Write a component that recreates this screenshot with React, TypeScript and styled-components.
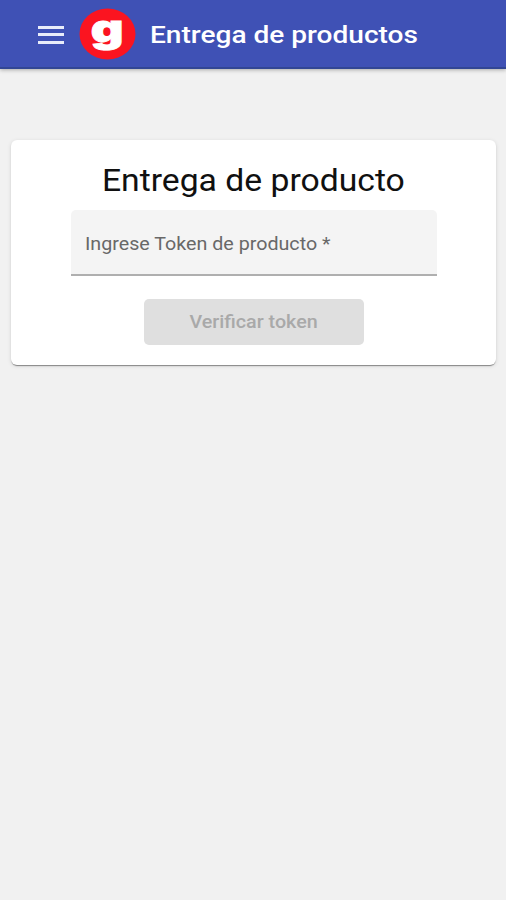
import React from "react";
import styled, { createGlobalStyle } from "styled-components";

const GlobalStyle = createGlobalStyle`
  * { box-sizing: border-box; }
  body {
    margin: 0;
    background: #f1f1f1;
    font-family: Roboto, "Liberation Sans", sans-serif;
  }
`;

const Page = styled.div`
  min-height: 900px;
  display: flex;
  flex-direction: column;
  background: #f1f1f1;
`;

const Toolbar = styled.header`
  height: 69px;
  display: flex;
  align-items: center;
  padding-left: 38px;
  background: #3f51b5;
  border-bottom: 2px solid #324694;
  box-shadow: 0 1px 4px rgba(0, 0, 0, 0.3);
`;

const MenuButton = styled.button`
  width: 26px;
  height: 18px;
  margin: 2px 15px 0 0;
  padding: 0;
  border: 0;
  background: none;
  display: flex;
  flex-direction: column;
  justify-content: space-between;
`;

const MenuLine = styled.span`
  height: 3px;
  background: #e8ecfa;
`;

const Logo = styled.svg`
  width: 57px;
  height: 52px;
  margin-right: 14px;
  display: block;
  overflow: visible;
`;

const Stretched = styled.span<{ $ratio: number; $origin?: string }>`
  display: inline-block;
  white-space: nowrap;
  transform: scaleX(${(p) => p.$ratio});
  transform-origin: ${(p) => p.$origin ?? "center"};
`;

const ToolbarTitle = styled.h1`
  margin: 2px 0 0;
  font-size: 24.4px;
  line-height: 32px;
  font-weight: 500;
  color: #fff;
`;

const Card = styled.main`
  height: 225px;
  margin: 71px 10px 0 11px;
  padding-top: 21px;
  display: flex;
  flex-direction: column;
  align-items: center;
  background: #fff;
  border-radius: 6px;
  box-shadow: 0 2px 1px -1px rgba(0, 0, 0, 0.3), 0 1px 1px rgba(0, 0, 0, 0.14),
    0 1px 4px rgba(0, 0, 0, 0.12);
`;

const CardTitle = styled.h2`
  margin: 0;
  font-size: 31px;
  line-height: 40px;
  font-weight: 400;
  color: #101010;
`;

const Field = styled.label`
  width: 366px;
  height: 66px;
  margin-top: 9px;
  padding: 3px 15px 0 14.5px;
  display: flex;
  align-items: center;
  background: #f4f4f4;
  border-bottom: 2px solid #afafaf;
  border-radius: 5px 5px 0 0;
  font-size: 18.2px;
  color: #686868;
`;

const SubmitButton = styled.button`
  width: 220px;
  height: 46px;
  margin-top: 23px;
  padding: 0 0 2px;
  border: 0;
  border-radius: 5px;
  background: #dfdfdf;
  color: #a9a9a9;
  font-family: inherit;
  font-size: 18px;
  font-weight: 500;
`;

export default function App() {
  return (
    <Page>
      <GlobalStyle />
      <Toolbar>
        <MenuButton aria-label="Menú">
          <MenuLine />
          <MenuLine />
          <MenuLine />
        </MenuButton>
        <Logo viewBox="0 0 57 52">
          <ellipse cx="28.5" cy="26" rx="28" ry="25.5" fill="#fb1420" />
          <text
            transform="translate(28.2 34.2) scale(1.3 1)"
            textAnchor="middle"
            fontFamily="Inter, Roboto, sans-serif"
            fontWeight="900"
            fontSize="39"
            fill="#fff"
            stroke="#fff"
            strokeWidth="0.9"
          >
            g
          </text>
        </Logo>
        <ToolbarTitle>
          <Stretched $ratio={1.15} $origin="left">Entrega de productos</Stretched>
        </ToolbarTitle>
      </Toolbar>
      <Card>
        <CardTitle>
          <Stretched $ratio={1.087}>Entrega de producto</Stretched>
        </CardTitle>
        <Field>
          <Stretched $ratio={1.082} $origin="left">Ingrese Token de producto *</Stretched>
        </Field>
        <SubmitButton disabled>
          <Stretched $ratio={1.095}>Verificar token</Stretched>
        </SubmitButton>
      </Card>
    </Page>
  );
}
